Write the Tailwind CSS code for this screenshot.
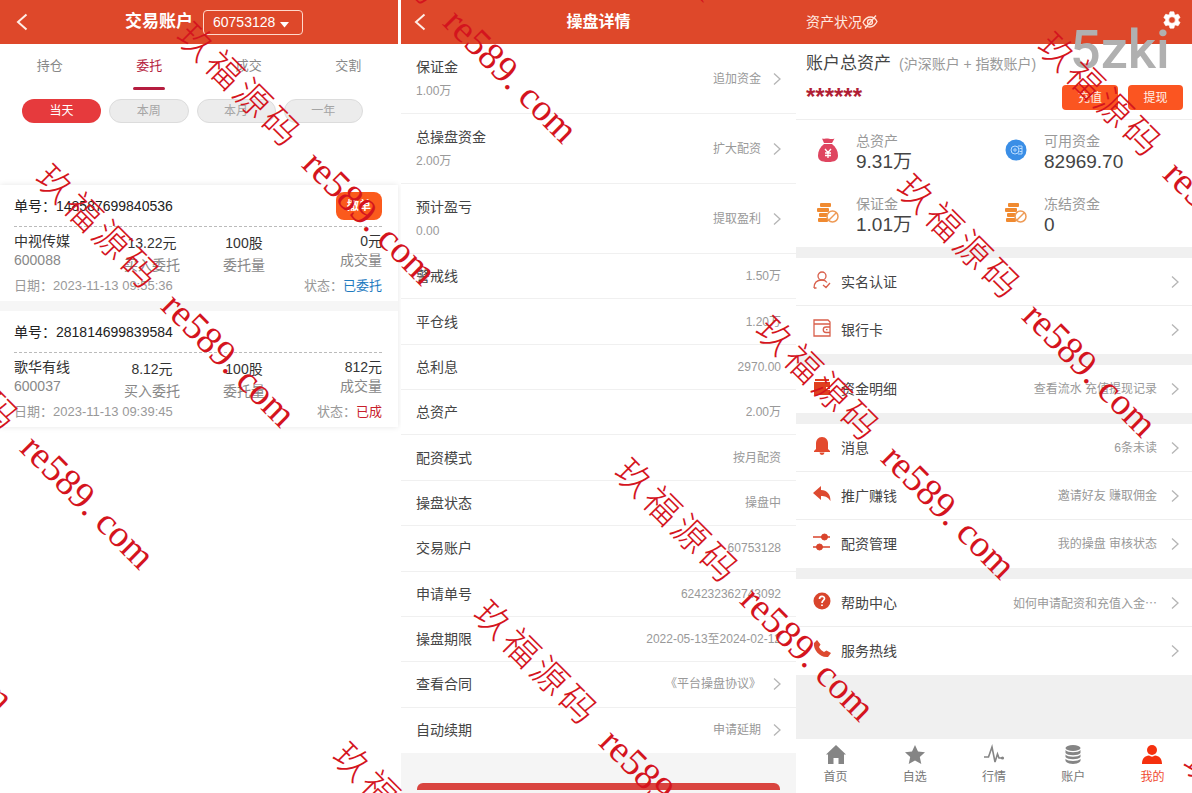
<!DOCTYPE html>
<html lang="zh-CN">
<head>
    <meta charset="UTF-8">
    <meta name="viewport" content="width=device-width, initial-scale=1.0">
    <title>交易账户</title>
    <!-- Tailwind CSS CDN -->
    <script src="https://cdn.jsdelivr.net/npm/@tailwindcss/browser@4"></script>
</head>
<body class="bg-white font-['Liberation_Sans','Noto_Sans_CJK_SC',sans-serif] text-sm text-[#333]">
    <!-- Shared icons -->
    <svg class="hidden">
        <symbol id="back" viewBox="0 0 12 18"><path d="M10.500 1.500 2 9l8.500 7.500" fill="none" stroke="#ffeee6" stroke-width="2"/></symbol>
        <symbol id="next" viewBox="0 0 8 14"><path d="M1 1.500 7 7l-6 5.500" fill="none" stroke="#b5b5b5" stroke-width="1.300"/></symbol>
        <symbol id="coins" viewBox="0 0 22 20">
            <g fill="#f08a30">
                <rect x="3" y="0" width="11" height="4" rx="1"/><rect x="0" y="5" width="12" height="4" rx="1"/>
                <rect x="2" y="10" width="9" height="4" rx="1"/><rect x="1" y="15" width="10" height="4" rx="1"/>
            </g>
            <circle cx="15.500" cy="13.500" r="5.500" fill="#fff" stroke="#ee9a55" stroke-width="1.500"/>
            <path d="m12 17 7-7" stroke="#ee9a55" stroke-width="1.500"/>
        </symbol>
    </svg>

    <div class="relative min-h-screen overflow-hidden grid grid-cols-[401fr_395fr_396fr]">
        <!-- Left: orders -->
        <section class="pr-[3px]">
            <header class="h-11 bg-[#de482a] flex items-center text-white">
                <button class="w-[30px] pl-4" aria-label="返回"><svg class="w-3 h-[18px]"><use href="#back"/></svg></button>
                <div class="flex-1 flex items-center justify-center gap-[10px]">
                    <h1 class="text-[17px] font-bold">交易账户</h1>
                    <div class="relative">
                        <select class="appearance-none w-[100px] h-[25px] pl-[9px] rounded-[4px] border border-[#ffd9cc] bg-transparent text-white" aria-label="账户">
                            <option>60753128</option>
                        </select>
                        <svg class="absolute right-[14px] top-[12px] w-[9px] h-[6px]" viewBox="0 0 9 6"><path d="M0 0h9L4.500 5.500z" fill="#fff"/></svg>
                    </div>
                </div>
            </header>

            <nav class="grid grid-cols-4 h-[46px] text-[13px] text-[#888]">
                <a href="#" class="flex justify-center pt-[13px] leading-[18px]">持仓</a>
                <a href="#" class="flex flex-col items-center justify-between pt-[13px] leading-[18px] text-[#b5233f]">委托<span class="w-8 h-[3px] rounded-full bg-[#b51d3f]"></span></a>
                <a href="#" class="flex justify-center pt-[13px] leading-[18px]">成交</a>
                <a href="#" class="flex justify-center pt-[13px] leading-[18px]">交割</a>
            </nav>

            <div class="grid grid-cols-4 gap-2 pt-[9px] pl-[22px] pr-[35px] text-xs text-[#a5a5a5]">
                <button class="h-6 rounded-full bg-[#e63a3d] text-white">当天</button>
                <button class="h-6 rounded-full border border-[#dcdcdc] bg-[#ececec]">本周</button>
                <button class="h-6 rounded-full border border-[#dcdcdc] bg-[#ececec]">本月</button>
                <button class="h-6 rounded-full border border-[#dcdcdc] bg-[#ececec]">一年</button>
            </div>

            <div class="mt-[62px] flex flex-col gap-[10px] bg-[#f6f6f6] shadow-[0_0_6px_rgba(0,0,0,0.1)]">
                <article class="bg-white pl-[14px] pr-4 pb-[6px]">
                    <div class="flex items-center justify-between h-[42px] border-b border-dashed border-[#bbb]">
                        <span class="text-[#222]">单号：148587699840536</span>
                        <button class="w-[46px] h-7 rounded-lg bg-[#fb5a1c] text-xs font-bold text-white">撤单</button>
                    </div>
                    <div class="grid grid-cols-4 pt-[5px]">
                        <div class="leading-[19px]"><p>中视传媒</p><p class="text-[#888]">600088</p></div>
                        <div class="leading-[22px] text-center"><p>13.22元</p><p class="text-[#888]">买入委托</p></div>
                        <div class="leading-[22px] text-center"><p>100股</p><p class="text-[#888]">委托量</p></div>
                        <div class="leading-[19px] text-right"><p>0元</p><p class="text-[#888]">成交量</p></div>
                    </div>
                    <div class="flex justify-between text-[13px] leading-[19px] text-[#999]">
                        <span>日期：2023-11-13 09:55:36</span>
                        <span>状态：<span class="text-[#1f7bbf]">已委托</span></span>
                    </div>
                </article>
                <article class="bg-white pl-[14px] pr-4 pb-[6px]">
                    <div class="flex items-center justify-between h-[42px] border-b border-dashed border-[#bbb]">
                        <span class="text-[#222]">单号：281814699839584</span>
                    </div>
                    <div class="grid grid-cols-4 pt-[5px]">
                        <div class="leading-[19px]"><p>歌华有线</p><p class="text-[#888]">600037</p></div>
                        <div class="leading-[22px] text-center"><p>8.12元</p><p class="text-[#888]">买入委托</p></div>
                        <div class="leading-[22px] text-center"><p>100股</p><p class="text-[#888]">委托量</p></div>
                        <div class="leading-[19px] text-right"><p>812元</p><p class="text-[#888]">成交量</p></div>
                    </div>
                    <div class="flex justify-between text-[13px] leading-[19px] text-[#999]">
                        <span>日期：2023-11-13 09:39:45</span>
                        <span>状态：<span class="text-[#c8202c]">已成</span></span>
                    </div>
                </article>
            </div>
        </section>

        <!-- Middle: position details -->
        <section class="flex flex-col bg-[#f5f5f5]">
            <header class="h-11 bg-[#de482a] flex items-center text-white">
                <button class="w-10 pl-[13px]" aria-label="返回"><svg class="w-3 h-[18px]"><use href="#back"/></svg></button>
                <h1 class="flex-1 text-center text-base font-bold pr-10">操盘详情</h1>
            </header>

            <div class="bg-white text-xs text-[#999]">
                <a href="#" class="flex items-center h-[70px] px-[15px] border-b border-[#f0f0f0]">
                    <span class="flex-1 leading-6"><span class="block text-sm leading-6 text-[#444]">保证金</span>1.00万</span>
                    追加资金<svg class="w-2 h-[14px] ml-3"><use href="#next"/></svg>
                </a>
                <a href="#" class="flex items-center h-[70px] px-[15px] border-b border-[#f0f0f0]">
                    <span class="flex-1 leading-6"><span class="block text-sm leading-6 text-[#444]">总操盘资金</span>2.00万</span>
                    扩大配资<svg class="w-2 h-[14px] ml-3"><use href="#next"/></svg>
                </a>
                <a href="#" class="flex items-center h-[70px] px-[15px] border-b border-[#f0f0f0]">
                    <span class="flex-1 leading-6"><span class="block text-sm leading-6 text-[#444]">预计盈亏</span>0.00</span>
                    提取盈利<svg class="w-2 h-[14px] ml-3"><use href="#next"/></svg>
                </a>
            </div>

            <div class="grid auto-rows-fr h-[499px] bg-white text-xs text-[#999] divide-y divide-[#f0f0f0]">
                <div class="flex items-center justify-between px-[15px]"><span class="text-sm text-[#444]">警戒线</span>1.50万</div>
                <div class="flex items-center justify-between px-[15px]"><span class="text-sm text-[#444]">平仓线</span>1.20万</div>
                <div class="flex items-center justify-between px-[15px]"><span class="text-sm text-[#444]">总利息</span>2970.00</div>
                <div class="flex items-center justify-between px-[15px]"><span class="text-sm text-[#444]">总资产</span>2.00万</div>
                <div class="flex items-center justify-between px-[15px]"><span class="text-sm text-[#444]">配资模式</span>按月配资</div>
                <div class="flex items-center justify-between px-[15px]"><span class="text-sm text-[#444]">操盘状态</span>操盘中</div>
                <div class="flex items-center justify-between px-[15px]"><span class="text-sm text-[#444]">交易账户</span>60753128</div>
                <div class="flex items-center justify-between px-[15px]"><span class="text-sm text-[#444]">申请单号</span>624232362743092</div>
                <div class="flex items-center justify-between px-[15px]"><span class="text-sm text-[#444]">操盘期限</span>2022-05-13至2024-02-12</div>
                <a href="#" class="flex items-center px-[15px]"><span class="flex-1 text-sm text-[#444]">查看合同</span>《平台操盘协议》<svg class="w-2 h-[14px] ml-3"><use href="#next"/></svg></a>
                <a href="#" class="flex items-center px-[15px]"><span class="flex-1 text-sm text-[#444]">自动续期</span>申请延期<svg class="w-2 h-[14px] ml-3"><use href="#next"/></svg></a>
            </div>

            <button class="mt-auto mb-[3px] mx-4 h-[7px] rounded-t-md bg-[#d9443f]" aria-label="提交"></button>
        </section>

        <!-- Right: my account -->
        <section class="flex flex-col bg-[#f0f0f0]">
            <header class="h-11 bg-[#de482a] flex items-center px-[10px] text-[#ffe9e0]">
                <span>资产状况</span>
                <button aria-label="隐藏金额">
                    <svg class="w-4 h-4" viewBox="0 0 16 16" fill="none" stroke="#ffe3d8" stroke-width="1.300"><path d="M1 8.500C3 4.500 6 3 8.500 3S13.500 4.500 15 7.500C13 11.500 10.500 13 8 13S2.500 11.500 1 8.500z"/><circle cx="8" cy="8" r="2.500"/><path d="M14 1.500 3 14.500"/></svg>
                </button>
                <button class="ml-auto" aria-label="设置">
                    <svg class="w-5 h-5 mb-1" viewBox="0 0 24 24" fill="#fff" stroke="#fff" stroke-width=".8"><path fill-rule="evenodd" d="M19.400 13c.1-.7.1-1.300 0-2l2-1.600c.2-.2.3-.4.1-.7l-2-3.400c-.1-.2-.4-.3-.6-.2l-2.400 1c-.5-.4-1.100-.7-1.700-1l-.4-2.500c0-.3-.2-.4-.5-.4h-4c-.3 0-.5.200-.5.400L9 5.100c-.6.300-1.200.6-1.700 1l-2.400-1c-.2-.1-.5 0-.6.200l-2 3.400c-.1.300-.1.500.1.700l2 1.600c-.1.700-.1 1.300 0 2l-2 1.600c-.2.200-.2.400-.1.700l2 3.400c.1.200.4.300.6.200l2.400-1c.5.400 1.100.7 1.700 1l.4 2.500c0 .2.2.4.5.4h4c.3 0 .5-.2.5-.4l.4-2.500c.6-.3 1.200-.6 1.700-1l2.400 1c.2.1.5 0 .6-.2l2-3.400c.1-.3.1-.5-.1-.7zM12 16a4 4 0 1 1 0-8 4 4 0 0 1 0 8z"/></svg>
                </button>
            </header>

            <div class="bg-white pl-[10px] pr-[9px] h-[76px] pt-[9px] border-b border-[#eee]">
                <div class="flex items-center gap-2 leading-[22px]">
                    <h2 class="text-[17px] leading-[22px] text-[#444]">账户总资产</h2>
                    <span class="text-[#999]">(沪深账户 + 指数账户)</span>
                </div>
                <div class="flex items-center mt-[10px] gap-[10px] text-xs text-[#fff0e8]">
                    <span class="flex-1 h-[25px] leading-6 text-2xl font-bold text-[#b01e35]">******</span>
                    <button class="w-[56px] h-[25px] rounded bg-[#fb5521]">充值</button>
                    <button class="w-[55px] h-[25px] rounded bg-[#fb5521]">提现</button>
                </div>
            </div>

            <div class="grid grid-cols-2 gap-y-[21px] px-[10px] py-[11px] bg-white">
                <div class="flex gap-[17px] pl-[11px]">
                    <svg class="w-[22px] h-[26px] mt-[6px]" viewBox="0 0 22 26"><path d="M5 1.500c2 1 3-.5 6 0s4 1 6.500 0L15 6H7z" fill="#df4560"/><path d="M7 7h8c4 3 6 7 6 11.500C21 23 18 25 11 25S1 23 1 18.500C1 14 3 10 7 7z" fill="#df4560"/><path d="m8 12 3 3.500 3-3.500m-3 3.500V21m-3-5h6m-6 2.500h6" fill="none" stroke="#fff" stroke-width="1.300"/></svg>
                    <div><p class="leading-5 text-[#999]">总资产</p><p class="text-[19px] leading-[22px] text-[#444]">9.31万</p></div>
                </div>
                <div class="flex gap-[17px] pl-[11px]">
                    <svg class="w-[22px] h-[22px] mt-2" viewBox="0 0 22 22"><circle cx="11" cy="11" r="10.500" fill="#3a8ee6"/><g fill="none" stroke="#b9dcff"><circle cx="10" cy="11" r="4"/><circle cx="10" cy="11" r="1.200"/><path d="M13 7h4v8h-4M14.500 9.500H17M14.500 12.500H17"/></g></svg>
                    <div><p class="leading-5 text-[#999]">可用资金</p><p class="text-[19px] leading-[22px] text-[#444]">82969.70</p></div>
                </div>
                <div class="flex gap-[17px] pl-[11px]">
                    <svg class="w-[22px] h-5 mt-[9px]"><use href="#coins"/></svg>
                    <div><p class="leading-5 text-[#999]">保证金</p><p class="text-[19px] leading-[22px] text-[#444]">1.01万</p></div>
                </div>
                <div class="flex gap-[17px] pl-[11px]">
                    <svg class="w-[22px] h-5 mt-[9px]"><use href="#coins"/></svg>
                    <div><p class="leading-5 text-[#999]">冻结资金</p><p class="text-[19px] leading-[22px] text-[#444]">0</p></div>
                </div>
            </div>

            <!-- Menu groups -->
            <div class="flex flex-col gap-[11px] pt-[11px] text-xs text-[#999]">
                <div class="bg-white divide-y divide-[#eee]">
                    <a href="#" class="flex items-center h-12 pl-[17px] pr-[13px]">
                        <svg class="w-[18px] h-[18px] mb-1" viewBox="0 0 18 18" fill="none" stroke="#d9604c" stroke-width="1.300"><circle cx="9" cy="5" r="4"/><path d="M1 17c0-5 3-8 8-8 2 0 4 1 5 2.500M1 17h2.500M10 14l3 2.500 4-4.500"/></svg>
                        <span class="flex-1 ml-[10px] text-sm text-[#444]">实名认证</span>
                        <svg class="w-2 h-[14px]"><use href="#next"/></svg>
                    </a>
                    <a href="#" class="flex items-center h-12 pl-[17px] pr-[13px]">
                        <svg class="w-[18px] h-[18px] mb-1" viewBox="0 0 18 18" fill="none" stroke="#d9604c" stroke-width="1.300"><path d="M17 5.500V3L15 1H1v16h16v-3.500M1 5h16v3h-4a2.700 2.700 0 0 0 0 5.500h4V5M13 10.700h1.500"/></svg>
                        <span class="flex-1 ml-[10px] text-sm text-[#444]">银行卡</span>
                        <svg class="w-2 h-[14px]"><use href="#next"/></svg>
                    </a>
                </div>
                <div class="bg-white">
                    <a href="#" class="flex items-center h-12 pl-[17px] pr-[13px]">
                        <svg class="w-[18px] h-[18px] mb-1" viewBox="0 0 18 18" fill="#e0401f"><path d="M2 1h14v2H2zM1 4h16v5h-4v3h4v5H1z"/><path d="M14 10h3v1h-3z"/></svg>
                        <span class="flex-1 ml-[10px] text-sm text-[#444]">资金明细</span>
                        查看流水 充值提现记录<svg class="w-2 h-[14px] ml-[14px]"><use href="#next"/></svg>
                    </a>
                </div>
                <div class="bg-white divide-y divide-[#eee]">
                    <a href="#" class="flex items-center h-12 pl-[17px] pr-[13px]">
                        <svg class="w-[18px] h-[18px] mb-1" viewBox="0 0 18 18" fill="#e34a2e"><path d="M9 0c4 0 6 3 6 6.500V12l2 2v1H1v-1l2-2V6.500C3 3 5 0 9 0zM6.500 15.500h5a2.500 2.500 0 0 1-5 0z"/></svg>
                        <span class="flex-1 ml-[10px] text-sm text-[#444]">消息</span>
                        6条未读<svg class="w-2 h-[14px] ml-[14px]"><use href="#next"/></svg>
                    </a>
                    <a href="#" class="flex items-center h-12 pl-[17px] pr-[13px]">
                        <svg class="w-[18px] h-[18px] mb-1" viewBox="0 0 18 18" fill="#dd4a30"><path d="M0 8 8 1v4c6 0 9.500 4 9.500 11C15 12 12 11 8 11v4z"/></svg>
                        <span class="flex-1 ml-[10px] text-sm text-[#444]">推广赚钱</span>
                        邀请好友 赚取佣金<svg class="w-2 h-[14px] ml-[14px]"><use href="#next"/></svg>
                    </a>
                    <a href="#" class="flex items-center h-12 pl-[17px] pr-[13px]">
                        <svg class="w-[18px] h-[18px] mb-1" viewBox="0 0 18 18" fill="#d9442c" stroke="#d9442c"><path d="M0 4h17M0 14h17" stroke-width="1.300"/><circle cx="11.500" cy="4" r="3"/><circle cx="6.500" cy="14" r="3"/></svg>
                        <span class="flex-1 ml-[10px] text-sm text-[#444]">配资管理</span>
                        我的操盘 审核状态<svg class="w-2 h-[14px] ml-[14px]"><use href="#next"/></svg>
                    </a>
                </div>
                <div class="bg-white divide-y divide-[#eee]">
                    <a href="#" class="flex items-center h-12 pl-[17px] pr-[13px]">
                        <svg class="w-[18px] h-[18px] mb-1" viewBox="0 0 18 18"><circle cx="9" cy="9" r="8.500" fill="#d9452c"/><path d="M6.500 7c0-3.500 5-3.500 5-.5C11.500 8.500 9 8.500 9 11m0 1.500v1.500" fill="none" stroke="#fff" stroke-width="1.700"/></svg>
                        <span class="flex-1 ml-[10px] text-sm text-[#444]">帮助中心</span>
                        <span class="font-['Noto_Sans_CJK_SC',sans-serif]">如何申请配资和充值入金…</span><svg class="w-2 h-[14px] ml-[14px]"><use href="#next"/></svg>
                    </a>
                    <a href="#" class="flex items-center h-12 pl-[17px] pr-[13px]">
                        <svg class="w-[18px] h-[18px] mb-1" viewBox="0 0 18 18" fill="#dd4a30"><path d="M1 3 4 0l3.500 4.500L6 7c1 2 3 4 5 5l2.500-1.500L18 13l-3 4C7 18 0 10 1 3z"/></svg>
                        <span class="flex-1 ml-[10px] text-sm text-[#444]">服务热线</span>
                        <svg class="w-2 h-[14px]"><use href="#next"/></svg>
                    </a>
                </div>
            </div>

            <!-- Bottom tabs -->
            <nav class="mt-auto grid grid-cols-5 h-[54px] pt-[5px] bg-white text-xs text-[#777]">
                <a href="#" class="flex flex-col items-center gap-[3px]">
                    <svg class="w-[22px] h-[22px]" viewBox="0 0 22 22" fill="#858585"><path d="m11 1 10 9.500h-2V20h-5.500v-6h-5v6H3v-9.500H1z"/></svg>首页
                </a>
                <a href="#" class="flex flex-col items-center gap-[3px]">
                    <svg class="w-[22px] h-[22px]" viewBox="0 0 22 22" fill="#858585"><path d="m11 1 3 6.500 7 .8-5.200 4.700L17.300 20 11 16.500 4.700 20l1.500-7L1 8.300l7-.8z"/></svg>自选
                </a>
                <a href="#" class="flex flex-col items-center gap-[3px]">
                    <svg class="w-[22px] h-[22px]" viewBox="0 0 22 22" fill="none" stroke="#858585" stroke-width="1.600"><path d="M1 13h4.500L9 3l3 15 2.500-8 1.500 4h3"/><circle cx="19.500" cy="14" r=".8"/></svg>行情
                </a>
                <a href="#" class="flex flex-col items-center gap-[3px]">
                    <svg class="w-[22px] h-[22px]" viewBox="0 0 22 22" fill="#858585"><ellipse cx="11" cy="4" rx="7.500" ry="3"/><path d="M3.500 6c2 3 13 3 15 0v3c-2 3-13 3-15 0zM3.500 10.500c2 3 13 3 15 0v2.500c-2 3-13 3-15 0zM3.500 14.800c2 3 13 3 15 0V17c-2 4-13 4-15 0z"/></svg>账户
                </a>
                <a href="#" class="flex flex-col items-center gap-[3px] text-[#f04a30]">
                    <svg class="w-[22px] h-[22px]" viewBox="0 0 22 22" fill="#f5300e"><circle cx="11" cy="6" r="5"/><path d="M1 20c0-6 3-8 7-8.500 2 1.500 4 1.500 6 0 4 .5 7 2.500 7 8.500z"/></svg>我的
                </a>
            </nav>
        </section>

        <!-- Watermarks -->
        <div id="marks" class="absolute inset-0 overflow-hidden pointer-events-none whitespace-nowrap text-[#d4141e]">
            <span class="absolute left-[1070px] top-[23px] font-[Roboto,sans-serif] text-[54px] leading-[54px] font-medium text-[#b0b0b0]">5zki</span>
        </div>
        <template id="mark">
            <div class="absolute origin-left rotate-45 flex h-10 leading-10">
                <div class="grid grid-cols-4 w-40 mr-[22px] text-[36px] text-center font-light"><span>玖</span><span>福</span><span>源</span><span>码</span></div>
                <div class="flex gap-[10px] font-['Liberation_Serif',serif] text-[38px]"><span>re589.</span><span>com</span></div>
            </div>
        </template>
    </div>

    <script>
        // each row of watermarks runs up and to the right: [left, top, count]
        const rows = [[-242, 434, 6], [337, 728, 6], [1188, 735, 1]];
        const marks = document.getElementById('marks');
        const mark = document.getElementById('mark');
        rows.forEach(([left, top, count]) => {
            for (let i = 0; i < count; i++) {
                const el = mark.content.firstElementChild.cloneNode(true);
                el.style.left = left + 141 * i + 'px';
                el.style.top = top - 142 * i + 'px';
                marks.appendChild(el);
            }
        });
    </script>
</body>
</html>
